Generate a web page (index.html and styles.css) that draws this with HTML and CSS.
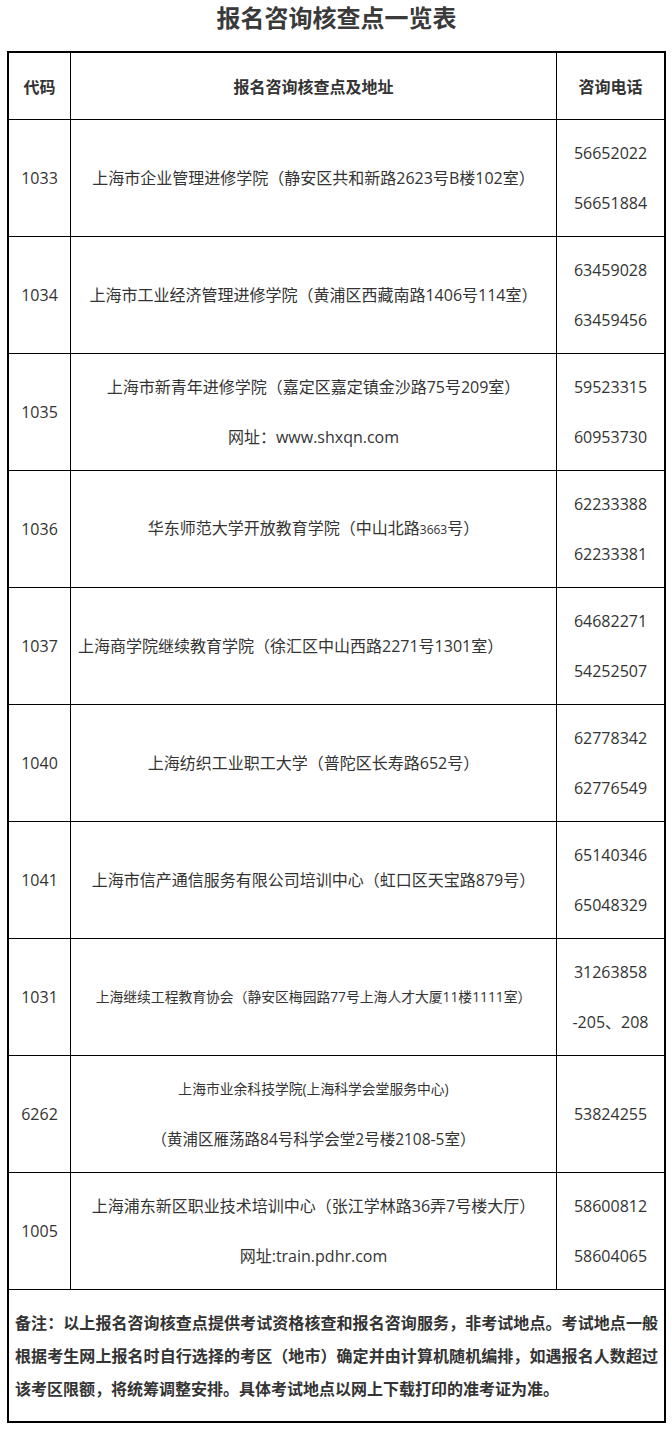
FILE: index.html
```html
<!DOCTYPE html>
<html lang="zh-CN">
<head>
<meta charset="utf-8">
<title>报名咨询核查点一览表</title>
<link rel="stylesheet" href="styles.css">
</head>
<body>
<div class="page">
  <h1 class="title">报名咨询核查点一览表</h1>
  <table class="sites">
    <thead>
      <tr>
        <th class="code">代码</th>
        <th class="addr">报名咨询核查点及地址</th>
        <th class="tel">咨询电话</th>
      </tr>
    </thead>
    <tbody>
      <tr>
        <td class="code">1033</td>
        <td class="addr">上海市企业管理进修学院（静安区共和新路2623号B楼102室）</td>
        <td class="tel"><div>56652022</div><div>56651884</div></td>
      </tr>
      <tr>
        <td class="code">1034</td>
        <td class="addr">上海市工业经济管理进修学院（黄浦区西藏南路1406号114室）</td>
        <td class="tel"><div>63459028</div><div>63459456</div></td>
      </tr>
      <tr>
        <td class="code">1035</td>
        <td class="addr"><div>上海市新青年进修学院（嘉定区嘉定镇金沙路75号209室）</div><div>网址：www.shxqn.com</div></td>
        <td class="tel"><div>59523315</div><div>60953730</div></td>
      </tr>
      <tr>
        <td class="code">1036</td>
        <td class="addr">华东师范大学开放教育学院（中山北路<span class="tiny">3663</span>号）</td>
        <td class="tel"><div>62233388</div><div>62233381</div></td>
      </tr>
      <tr>
        <td class="code">1037</td>
        <td class="addr left">上海商学院继续教育学院（徐汇区中山西路2271号1301室）</td>
        <td class="tel"><div>64682271</div><div>54252507</div></td>
      </tr>
      <tr>
        <td class="code">1040</td>
        <td class="addr">上海纺织工业职工大学（普陀区长寿路652号）</td>
        <td class="tel"><div>62778342</div><div>62776549</div></td>
      </tr>
      <tr>
        <td class="code">1041</td>
        <td class="addr">上海市信产通信服务有限公司培训中心（虹口区天宝路879号）</td>
        <td class="tel"><div>65140346</div><div>65048329</div></td>
      </tr>
      <tr>
        <td class="code">1031</td>
        <td class="addr"><div class="sm">上海继续工程教育协会（静安区梅园路77号上海人才大厦11楼1111室）</div></td>
        <td class="tel"><div>31263858</div><div>-205、208</div></td>
      </tr>
      <tr>
        <td class="code">6262</td>
        <td class="addr"><div class="sm">上海市业余科技学院(上海科学会堂服务中心)</div><div class="md">（黄浦区雁荡路84号科学会堂2号楼2108-5室）</div></td>
        <td class="tel">53824255</td>
      </tr>
      <tr>
        <td class="code">1005</td>
        <td class="addr"><div>上海浦东新区职业技术培训中心（张江学林路36弄7号楼大厅）</div><div>网址:train.pdhr.com</div></td>
        <td class="tel"><div>58600812</div><div>58604065</div></td>
      </tr>
      <tr class="last">
        <td class="note" colspan="3">备注：以上报名咨询核查点提供考试资格核查和报名咨询服务，非考试地点。考试地点一般根据考生网上报名时自行选择的考区（地市）确定并由计算机随机编排，如遇报名人数超过该考区限额，将统筹调整安排。具体考试地点以网上下载打印的准考证为准。</td>
      </tr>
    </tbody>
  </table>
</div>
</body>
</html>
```

FILE: styles.css
```css
html, body {
  margin: 0;
  padding: 0;
  background: #ffffff;
}

body {
  color: #333333;
  font-family: "Open Sans", "Noto Sans CJK SC", sans-serif;
  font-size: 16px;
}

.page {
  padding: 0 6px 0 7px;
}

.title {
  margin: 0 0 17px;
  font-size: 24px;
  line-height: 34px;
  font-weight: 700;
  text-align: center;
  color: #3a3a3a;
  font-family: "Noto Sans CJK SC", sans-serif;
}

.sites {
  width: 659px;
  box-sizing: border-box;
  table-layout: fixed;
  border-collapse: separate;
  border-spacing: 0;
  border: 2px solid #000000;
}

.sites th,
.sites td {
  box-sizing: border-box;
  padding: 8px 7px;
  line-height: 50px;
  text-align: center;
  vertical-align: middle;
  border-right: 1px solid #000000;
  border-bottom: 1px solid #000000;
  font-weight: 400;
  white-space: nowrap;
}

.sites th {
  font-weight: 700;
  color: #333333;
  font-family: "Noto Sans CJK SC", sans-serif;
}

.sites th.code { width: 62px; }
.sites th.addr { width: 486px; }
.sites th.tel { width: 107px; }

.sites .tel {
  border-right: none;
  padding-left: 2px;
  padding-right: 2px;
}

.sites td.addr {
  padding-left: 4px;
  padding-right: 4px;
}

.sites td.addr.left {
  text-align: left;
  padding-left: 7px;
}

.sm {
  font-size: 13.8px;
}

.md {
  font-size: 15.5px;
}

.tiny {
  font-size: 12px;
}

.sites tr.last td {
  border-bottom: none;
}

.sites td.note {
  border-right: none;
  padding: 16px 6px 16px 6px;
  line-height: 33px;
  font-weight: 700;
  text-align: justify;
  white-space: normal;
  font-family: "Noto Sans CJK SC", sans-serif;
  color: #333333;
}
```
